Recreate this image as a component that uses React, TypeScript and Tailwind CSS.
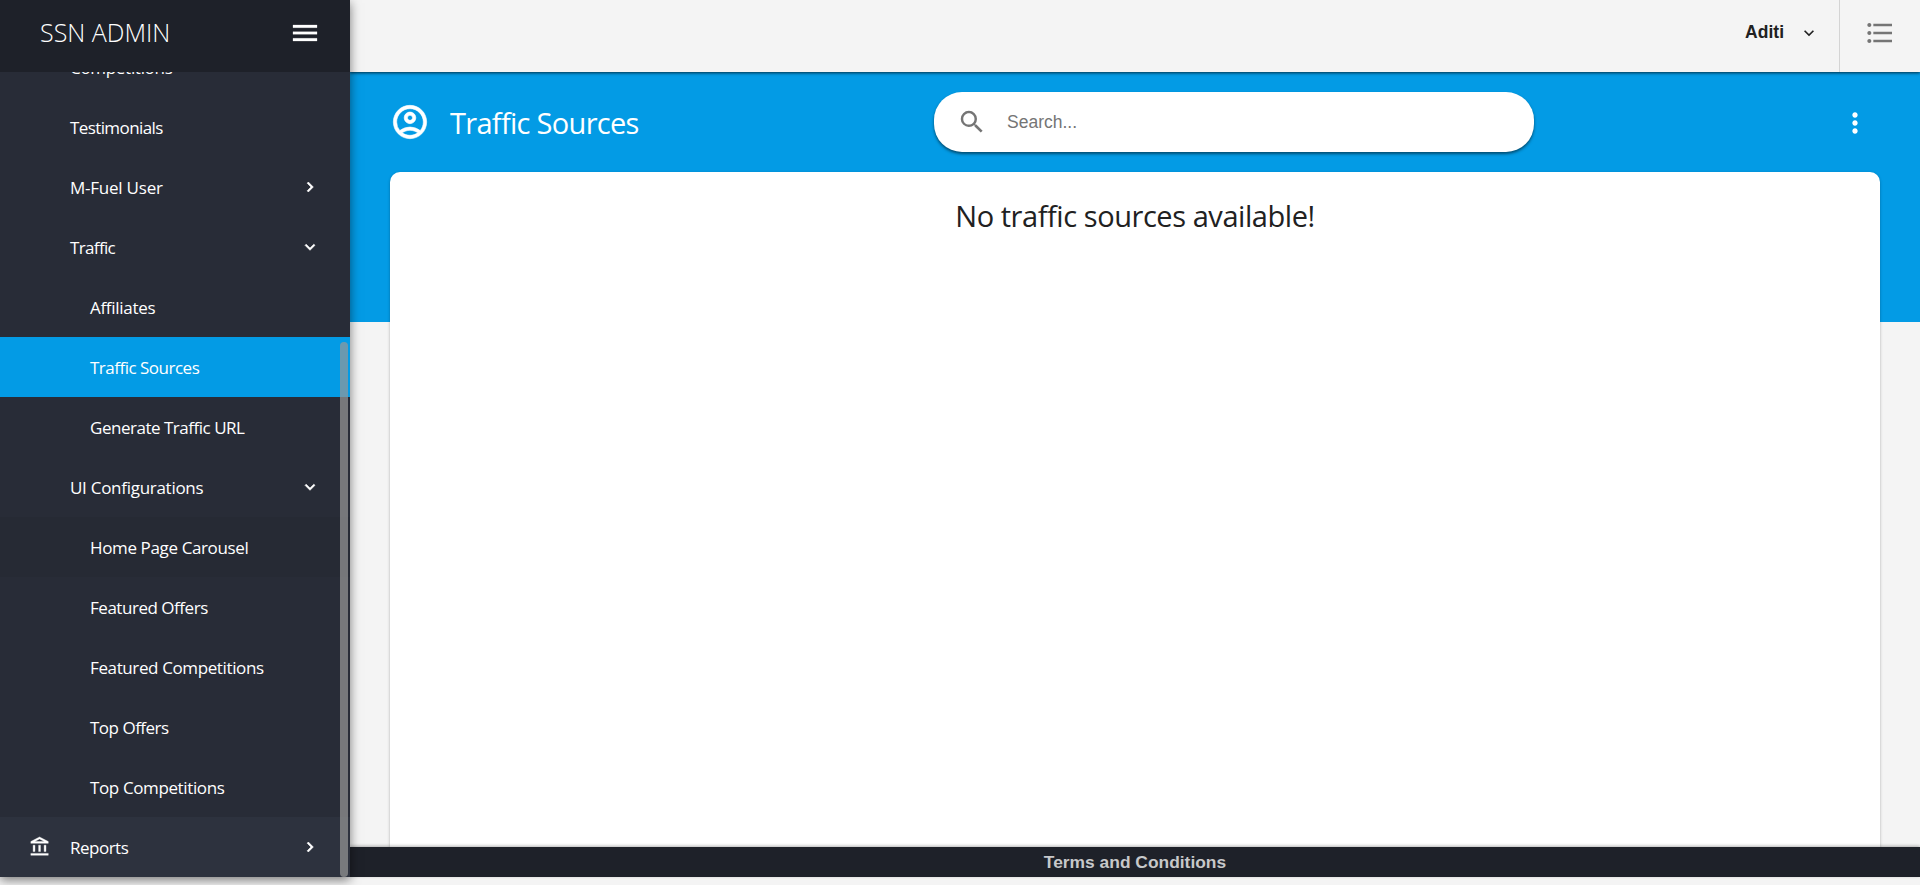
import { MdMenu, MdChevronRight, MdExpandMore, MdFormatListBulleted, MdMoreVert, MdSearch, MdOutlineAccountCircle, MdOutlineAccountBalance } from "react-icons/md";

type Item = { label: string; text: string; nested?: boolean; state?: "open" | "closed"; bg?: string };

const items: Item[] = [
  { label: "Competitions", text: "tracking-[-0.3px]" },
  { label: "Testimonials", text: "tracking-[-0.6px]" },
  { label: "M-Fuel User", text: "tracking-[-0.23px]", state: "closed" },
  { label: "Traffic", text: "tracking-[-0.65px]", state: "open" },
  { label: "Affiliates", text: "tracking-[-0.3px]", nested: true },
  { label: "Traffic Sources", text: "tracking-[-0.5px]", nested: true, bg: "bg-[#039be5]" },
  { label: "Generate Traffic URL", text: "tracking-[-0.48px]", nested: true },
  { label: "UI Configurations", text: "tracking-[-0.28px]", state: "open" },
  { label: "Home Page Carousel", text: "tracking-[-0.37px]", nested: true, bg: "bg-[#262a34]" },
  { label: "Featured Offers", text: "tracking-[-0.47px]", nested: true },
  { label: "Featured Competitions", text: "tracking-[-0.38px]", nested: true },
  { label: "Top Offers", text: "tracking-[-0.5px]", nested: true },
  { label: "Top Competitions", text: "tracking-[-0.38px]", nested: true },
];

function Chevron({ state }: { state?: "open" | "closed" }) {
  if (!state) return null;
  return state === "open" ? (
    <MdExpandMore className="size-5 stroke-current stroke-[0.7] [&>[fill=none]]:stroke-none" />
  ) : (
    <MdChevronRight className="size-5 stroke-current stroke-[0.7] [&>[fill=none]]:stroke-none" />
  );
}

function Sidebar() {
  return (
    <aside className="relative z-20 flex h-full w-[350px] shrink-0 flex-col bg-[#2d323e] text-white shadow-[0_3px_10px_rgba(0,0,0,0.5)]">
      <div className="z-10 flex h-[72px] shrink-0 items-center justify-between bg-[#1e2129] pb-[6px] pl-10 pr-[29px]">
        <span className="text-[25px] font-light">SSN ADMIN</span>
        <MdMenu className="size-8 stroke-current stroke-[0.2] [&>[fill=none]]:stroke-none" />
      </div>
      <nav className="flex min-h-0 flex-1 flex-col justify-end overflow-hidden text-[17px]">
        <div className="bg-[#282c37]">
          {items.map((item) => (
            <div
              key={item.label}
              className={`flex h-[60px] items-center justify-between pr-[30px] ${item.nested ? "pl-[90px]" : "pl-[70px]"} ${item.bg ?? ""}`}
            >
              <span className={`pt-px ${item.text}`}>{item.label}</span>
              <Chevron state={item.state} />
            </div>
          ))}
        </div>
        <div className="flex h-[60px] shrink-0 items-center pl-[29px] pr-[30px]">
          <MdOutlineAccountBalance className="mr-[19px] size-[22px] stroke-current stroke-[0.4] [&>[fill=none]]:stroke-none" />
          <span className="flex-1 pt-px tracking-[-0.5px]">Reports</span>
          <Chevron state="closed" />
        </div>
      </nav>
      <div className="absolute bottom-0 right-[2px] h-[535px] w-2 rounded-full bg-[#999]/70" />
    </aside>
  );
}

export default function App() {
  return (
    <div className="h-[885px] w-full overflow-hidden bg-[#f4f4f4] font-['Open_Sans',sans-serif]">
      <div className="flex h-[877px]">
        <Sidebar />
        <div className="flex min-w-0 flex-1 flex-col">
          <header className="z-10 flex h-[72px] shrink-0 justify-end bg-[#f4f4f4] shadow-[0_1px_3px_rgba(0,0,0,0.7)]">
            <div className="flex items-center pb-[7px] pr-5 font-['Liberation_Sans',Arial,sans-serif] text-[17.5px] font-bold text-[#212121]">
              <span>Aditi</span>
              <MdExpandMore className="ml-[15px] size-5" />
            </div>
            <div className="flex w-[81px] items-center justify-center border-l border-[#d4d4d4] pb-[6px] text-[#757575]">
              <MdFormatListBulleted className="size-8" />
            </div>
          </header>
          <main className="flex min-h-0 flex-1 flex-col bg-[linear-gradient(#039be5_250px,#f4f4f4_250px)] px-10">
            <div className="flex h-[100px] shrink-0 items-center text-white">
              <MdOutlineAccountCircle className="mb-px size-10 stroke-current stroke-[0.35] [&>[fill=none]]:stroke-none" />
              <h1 className="ml-5 w-[484px] pt-px text-[29px] tracking-[-0.7px]">Traffic Sources</h1>
              <div className="flex h-[60px] w-[600px] items-center rounded-[28px] bg-white pl-[23px] font-['Liberation_Sans',Arial,sans-serif] text-[17.5px] text-[#757575] shadow-[0_2px_3px_rgba(0,0,0,0.5)]">
                <MdSearch className="mb-px size-[30px]" />
                <span className="ml-5">Search...</span>
              </div>
              <MdMoreVert className="ml-auto mr-[9px] mt-0.5 size-8" />
            </div>
            <section className="min-h-0 flex-1 rounded-t-[10px] bg-white pt-[23px] text-center shadow-[0_1px_3px_rgba(0,0,0,0.3)]">
              <h2 className="text-[29px] leading-[42px] tracking-[-0.44px] text-[#212121]">No traffic sources available!</h2>
            </section>
          </main>
          <footer className="z-10 flex h-[30px] shrink-0 items-center justify-center bg-[#1e2129] font-['Liberation_Sans',Arial,sans-serif] text-[17.4px] font-bold text-[#c7c8ca] shadow-[0_-1px_3px_rgba(0,0,0,0.3)]">
            Terms and Conditions
          </footer>
        </div>
      </div>
    </div>
  );
}
